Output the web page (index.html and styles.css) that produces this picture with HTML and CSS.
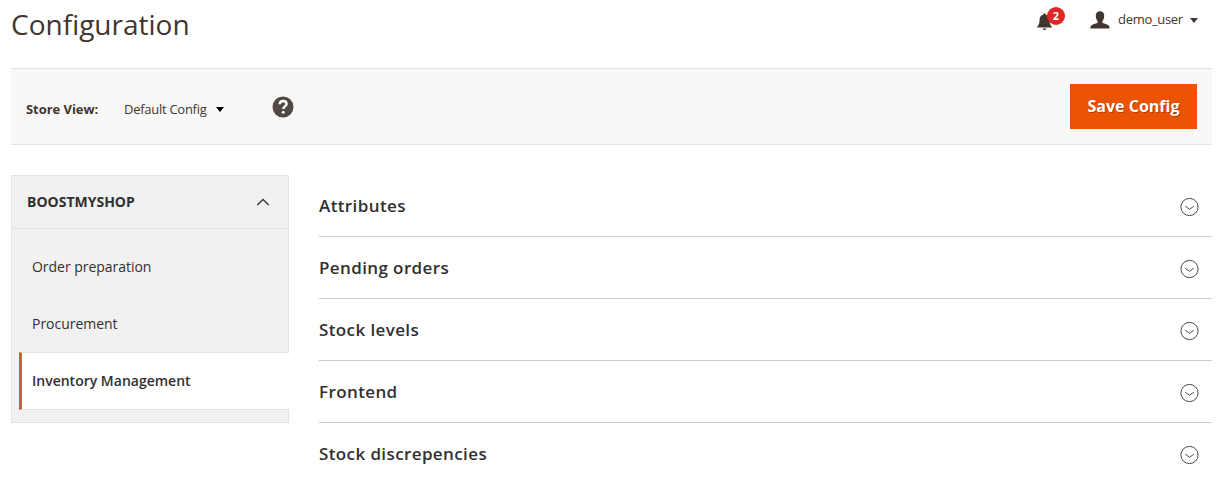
FILE: index.html
```html
<!DOCTYPE html>
<html lang="en">
<head>
<meta charset="utf-8">
<title>Configuration</title>
<link rel="stylesheet" href="styles.css">
</head>
<body>
<header class="header">
  <h1 class="title">Configuration</h1>
  <div class="tools">
    <div class="notifications">
      <svg class="bell" width="15" height="18" viewBox="0 0 15 18"><path d="M7.500 .5c.9 0 1.400.5 1.400 1.200C11.300 2.300 12.300 4 12.400 6.400c.1 3.300.6 5.200 2.400 7.400v.8H.2v-.8C2 11.600 2.500 9.700 2.600 6.400 2.700 4 3.700 2.300 6.100 1.700 6.100 1 6.600.5 7.500.5zM5.700 15.600h3.600c-.2 1-.9 1.500-1.800 1.500s-1.600-.5-1.800-1.500z"/></svg>
      <span class="badge">2</span>
    </div>
    <div class="user">
      <svg class="avatar" width="20" height="18" viewBox="0 0 20 18"><path d="M10 .3c2.700 0 4.200 1.700 4.200 4.300 0 2.300-.6 4.300-1.800 5.500v1.300c.3.700 1.500.9 3.100 1.500 2.900.9 4.100 1.500 4.200 4.700H.3c.1-3.200 1.300-3.800 4.200-4.700 1.600-.6 2.800-.8 3.100-1.500v-1.300C6.400 8.900 5.800 6.900 5.800 4.600 5.800 2 7.300.3 10 .3z"/></svg>
      <span class="user-name">demo_user</span>
      <svg class="caret" width="8" height="5" viewBox="0 0 8 5"><path d="M0 0h8L4 5z"/></svg>
    </div>
  </div>
</header>

<div class="toolbar">
  <span class="store-label">Store View:</span>
  <span class="store-value">Default Config</span>
  <svg class="store-caret" width="8" height="5" viewBox="0 0 8 5"><path d="M0 0h8L4 5z"/></svg>
  <svg class="help" width="22" height="22" viewBox="0 0 22 22"><circle cx="11" cy="11" r="10.500"/><path class="help-mark" d="M7.700 8.300C7.800 6.300 9.100 5.100 11.100 5.100c2 0 3.400 1.100 3.400 2.800 0 2.500-3.200 2.500-3.200 5.100"/><circle class="help-dot" cx="11.200" cy="16.300" r="1.500"/></svg>
  <button class="save" type="button">Save Config</button>
</div>

<div class="columns">
  <nav class="sidebar">
    <div class="group">
      <span>BOOSTMYSHOP</span>
      <svg class="collapse" width="14" height="8" viewBox="0 0 14 8"><path class="line" d="M1.300 7.100 7 1.400l5.700 5.700"/></svg>
    </div>
    <ul class="nav">
      <li class="nav-item">Order preparation</li>
      <li class="nav-item">Procurement</li>
      <li class="nav-item active">Inventory Management</li>
    </ul>
  </nav>
  <main class="sections">
    <div class="section"><span class="name">Attributes</span><svg class="toggle" width="20" height="20" viewBox="0 0 20 20"><circle cx="9.500" cy="10" r="8.600"/><path d="M5.200 9.200 9.500 12.300l4.300-3.100"/></svg></div>
    <div class="section"><span class="name">Pending orders</span><svg class="toggle" width="20" height="20" viewBox="0 0 20 20"><circle cx="9.500" cy="10" r="8.600"/><path d="M5.200 9.200 9.500 12.300l4.300-3.100"/></svg></div>
    <div class="section"><span class="name">Stock levels</span><svg class="toggle" width="20" height="20" viewBox="0 0 20 20"><circle cx="9.500" cy="10" r="8.600"/><path d="M5.200 9.200 9.500 12.300l4.300-3.100"/></svg></div>
    <div class="section"><span class="name">Frontend</span><svg class="toggle" width="20" height="20" viewBox="0 0 20 20"><circle cx="9.500" cy="10" r="8.600"/><path d="M5.200 9.200 9.500 12.300l4.300-3.100"/></svg></div>
    <div class="section"><span class="name">Stock discrepencies</span><svg class="toggle" width="20" height="20" viewBox="0 0 20 20"><circle cx="9.500" cy="10" r="8.600"/><path d="M5.200 9.200 9.500 12.300l4.300-3.100"/></svg></div>
  </main>
</div>
</body>
</html>
```
FILE: styles.css
```css
* { box-sizing: border-box; }
body {
  margin: 0;
  height: 477px;
  overflow: hidden;
  padding: 0 13px 0 11px;
  background: #fff;
  color: #41362f;
  font-family: "Open Sans", "Noto Sans", sans-serif;
  font-size: 14px;
}
svg { display: block; flex: none; }
.header {
  display: flex;
  justify-content: space-between;
  height: 68px;
}
.title {
  margin: 5px 0 0;
  font-size: 28px;
  line-height: 38px;
  font-weight: 400;
}
.tools {
  display: flex;
  align-items: center;
  height: 40px;
  padding-right: 14px;
}
.notifications { position: relative; margin-right: 38px; }
.bell { fill: #41362f; margin-top: 4px; }
.badge {
  position: absolute;
  left: 10px;
  top: -2px;
  width: 18px;
  height: 18px;
  border-radius: 9px;
  background: #e22626;
  color: #fff;
  font-size: 11px;
  font-weight: 700;
  line-height: 18px;
  text-align: center;
}
.user { display: flex; align-items: center; }
.avatar { fill: #41362f; }
.user-name {
  width: 65px;
  margin: -2px 7px 0 8px;
  font-size: 13px;
  line-height: 18px;
  letter-spacing: -.3px;
}
.caret { fill: #41362f; margin-top: 1px; }
.toolbar {
  display: flex;
  align-items: center;
  height: 77px;
  padding: 0 15px;
  border-top: 1px solid #e3e3e3;
  border-bottom: 1px solid #e3e3e3;
  background: #f8f8f8;
}
.store-label { width: 98px; font-size: 13px; font-weight: 700; padding-top: 4px; letter-spacing: -.05px; }
.store-value { width: 92px; font-size: 13px; padding-top: 4px; letter-spacing: -.27px; }
.store-caret { fill: #000; margin-top: 6px; }
.help { margin-left: 48px; fill: #514943; }
.help-mark { fill: none; stroke: #fff; stroke-width: 2.500; }
.help-dot { fill: #fff; }
.save {
  width: 127px;
  height: 45px;
  margin-left: auto;
  padding: 0 0 2px;
  border: 0;
  background: #eb5202;
  color: #fff;
  font: 700 16px/22px "Open Sans", "Noto Sans", sans-serif;
  text-shadow: 1px 1px 0 rgba(0, 0, 0, .25);
}
.columns { display: flex; gap: 30px; padding-top: 30px; }
.sidebar {
  width: 278px;
  height: 248px;
  flex: none;
  border: 1px solid #e3e3e3;
  background: #f1f1f1;
}
.group {
  display: flex;
  align-items: center;
  justify-content: space-between;
  height: 53px;
  padding: 0 18px 2px 15px;
  border-bottom: 1px solid #e3e3e3;
  color: #303030;
  font-weight: 700;
}
.collapse { margin-top: 2px; }
.line { fill: none; stroke: #41362f; stroke-width: 1.400; }
.nav { list-style: none; margin: 0; padding: 9px 0 0 7px; }
.nav-item { height: 57px; padding-left: 13px; line-height: 58px; color: #303030; letter-spacing: -.03px; }
.active {
  height: 58px;
  margin-right: -1px;
  padding-left: 10px;
  border-left: 3px solid #d1602a;
  border-top: 1px solid #e3e3e3;
  border-bottom: 1px solid #e3e3e3;
  background: #fff;
  font-weight: 600;
  line-height: 56px;
  letter-spacing: 0;
}
.sections { flex: 1; }
.section {
  display: flex;
  align-items: center;
  justify-content: space-between;
  height: 62px;
  padding-right: 12px;
  border-bottom: 1px solid #ccc;
  color: #303030;
}
.name { font-size: 17px; font-weight: 600; letter-spacing: .39px; }
.toggle { margin-top: 3px; fill: none; stroke: #514943; stroke-width: 1; }
```
